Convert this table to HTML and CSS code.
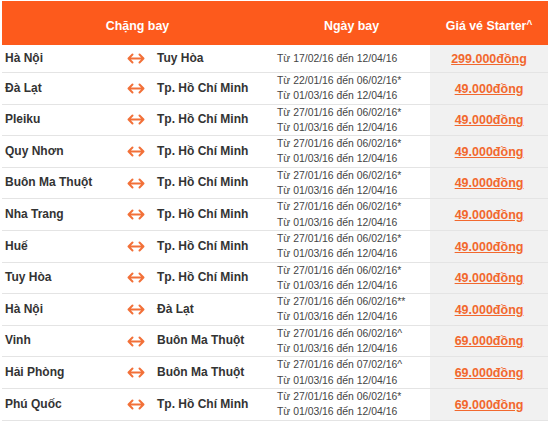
FILE: index.html
```html
<!DOCTYPE html>
<html lang="vi">
<head>
<meta charset="utf-8">
<title>Giá vé Starter</title>
<link rel="stylesheet" href="styles.css">
</head>
<body>
<table class="fares">
  <colgroup>
    <col class="c-from">
    <col class="c-arrow">
    <col class="c-to">
    <col class="c-date">
    <col class="c-price">
  </colgroup>
  <thead>
    <tr>
      <th colspan="3">Chặng bay</th>
      <th>Ngày bay</th>
      <th>Giá vé Starter<span class="caret">^</span></th>
    </tr>
  </thead>
  <tbody>
    <tr class="single">
      <td class="from">Hà Nội</td>
      <td class="arrow"><svg viewBox="0 0 18 11" width="18" height="11"><path d="M1.5 5.5h15M5.5 1.5l-4 4 4 4M12.5 1.5l4 4-4 4" fill="none" stroke="#f27038" stroke-width="2" stroke-linecap="round" stroke-linejoin="round"/></svg></td>
      <td class="to">Tuy Hòa</td>
      <td class="date">Từ 17/02/16 đến 12/04/16</td>
      <td class="price"><a href="#">299.000đồng</a></td>
    </tr>
    <tr>
      <td class="from">Đà Lạt</td>
      <td class="arrow"><svg viewBox="0 0 18 11" width="18" height="11"><path d="M1.5 5.5h15M5.5 1.5l-4 4 4 4M12.5 1.5l4 4-4 4" fill="none" stroke="#f27038" stroke-width="2" stroke-linecap="round" stroke-linejoin="round"/></svg></td>
      <td class="to">Tp. Hồ Chí Minh</td>
      <td class="date">Từ 22/01/16 đến 06/02/16*<br>Từ 01/03/16 đến 12/04/16</td>
      <td class="price"><a href="#">49.000đồng</a></td>
    </tr>
    <tr>
      <td class="from">Pleiku</td>
      <td class="arrow"><svg viewBox="0 0 18 11" width="18" height="11"><path d="M1.5 5.5h15M5.5 1.5l-4 4 4 4M12.5 1.5l4 4-4 4" fill="none" stroke="#f27038" stroke-width="2" stroke-linecap="round" stroke-linejoin="round"/></svg></td>
      <td class="to">Tp. Hồ Chí Minh</td>
      <td class="date">Từ 27/01/16 đến 06/02/16*<br>Từ 01/03/16 đến 12/04/16</td>
      <td class="price"><a href="#">49.000đồng</a></td>
    </tr>
    <tr>
      <td class="from">Quy Nhơn</td>
      <td class="arrow"><svg viewBox="0 0 18 11" width="18" height="11"><path d="M1.5 5.5h15M5.5 1.5l-4 4 4 4M12.5 1.5l4 4-4 4" fill="none" stroke="#f27038" stroke-width="2" stroke-linecap="round" stroke-linejoin="round"/></svg></td>
      <td class="to">Tp. Hồ Chí Minh</td>
      <td class="date">Từ 27/01/16 đến 06/02/16*<br>Từ 01/03/16 đến 12/04/16</td>
      <td class="price"><a href="#">49.000đồng</a></td>
    </tr>
    <tr>
      <td class="from">Buôn Ma Thuột</td>
      <td class="arrow"><svg viewBox="0 0 18 11" width="18" height="11"><path d="M1.5 5.5h15M5.5 1.5l-4 4 4 4M12.5 1.5l4 4-4 4" fill="none" stroke="#f27038" stroke-width="2" stroke-linecap="round" stroke-linejoin="round"/></svg></td>
      <td class="to">Tp. Hồ Chí Minh</td>
      <td class="date">Từ 27/01/16 đến 06/02/16*<br>Từ 01/03/16 đến 12/04/16</td>
      <td class="price"><a href="#">49.000đồng</a></td>
    </tr>
    <tr>
      <td class="from">Nha Trang</td>
      <td class="arrow"><svg viewBox="0 0 18 11" width="18" height="11"><path d="M1.5 5.5h15M5.5 1.5l-4 4 4 4M12.5 1.5l4 4-4 4" fill="none" stroke="#f27038" stroke-width="2" stroke-linecap="round" stroke-linejoin="round"/></svg></td>
      <td class="to">Tp. Hồ Chí Minh</td>
      <td class="date">Từ 27/01/16 đến 06/02/16*<br>Từ 01/03/16 đến 12/04/16</td>
      <td class="price"><a href="#">49.000đồng</a></td>
    </tr>
    <tr>
      <td class="from">Huế</td>
      <td class="arrow"><svg viewBox="0 0 18 11" width="18" height="11"><path d="M1.5 5.5h15M5.5 1.5l-4 4 4 4M12.5 1.5l4 4-4 4" fill="none" stroke="#f27038" stroke-width="2" stroke-linecap="round" stroke-linejoin="round"/></svg></td>
      <td class="to">Tp. Hồ Chí Minh</td>
      <td class="date">Từ 27/01/16 đến 06/02/16*<br>Từ 01/03/16 đến 12/04/16</td>
      <td class="price"><a href="#">49.000đồng</a></td>
    </tr>
    <tr>
      <td class="from">Tuy Hòa</td>
      <td class="arrow"><svg viewBox="0 0 18 11" width="18" height="11"><path d="M1.5 5.5h15M5.5 1.5l-4 4 4 4M12.5 1.5l4 4-4 4" fill="none" stroke="#f27038" stroke-width="2" stroke-linecap="round" stroke-linejoin="round"/></svg></td>
      <td class="to">Tp. Hồ Chí Minh</td>
      <td class="date">Từ 27/01/16 đến 06/02/16*<br>Từ 01/03/16 đến 12/04/16</td>
      <td class="price"><a href="#">49.000đồng</a></td>
    </tr>
    <tr>
      <td class="from">Hà Nội</td>
      <td class="arrow"><svg viewBox="0 0 18 11" width="18" height="11"><path d="M1.5 5.5h15M5.5 1.5l-4 4 4 4M12.5 1.5l4 4-4 4" fill="none" stroke="#f27038" stroke-width="2" stroke-linecap="round" stroke-linejoin="round"/></svg></td>
      <td class="to">Đà Lạt</td>
      <td class="date">Từ 27/01/16 đến 06/02/16**<br>Từ 01/03/16 đến 12/04/16</td>
      <td class="price"><a href="#">49.000đồng</a></td>
    </tr>
    <tr>
      <td class="from">Vinh</td>
      <td class="arrow"><svg viewBox="0 0 18 11" width="18" height="11"><path d="M1.5 5.5h15M5.5 1.5l-4 4 4 4M12.5 1.5l4 4-4 4" fill="none" stroke="#f27038" stroke-width="2" stroke-linecap="round" stroke-linejoin="round"/></svg></td>
      <td class="to">Buôn Ma Thuột</td>
      <td class="date">Từ 27/01/16 đến 06/02/16^<br>Từ 01/03/16 đến 12/04/16</td>
      <td class="price"><a href="#">69.000đồng</a></td>
    </tr>
    <tr>
      <td class="from">Hải Phòng</td>
      <td class="arrow"><svg viewBox="0 0 18 11" width="18" height="11"><path d="M1.5 5.5h15M5.5 1.5l-4 4 4 4M12.5 1.5l4 4-4 4" fill="none" stroke="#f27038" stroke-width="2" stroke-linecap="round" stroke-linejoin="round"/></svg></td>
      <td class="to">Buôn Ma Thuột</td>
      <td class="date">Từ 27/01/16 đến 07/02/16^<br>Từ 01/03/16 đến 12/04/16</td>
      <td class="price"><a href="#">69.000đồng</a></td>
    </tr>
    <tr>
      <td class="from">Phú Quốc</td>
      <td class="arrow"><svg viewBox="0 0 18 11" width="18" height="11"><path d="M1.5 5.5h15M5.5 1.5l-4 4 4 4M12.5 1.5l4 4-4 4" fill="none" stroke="#f27038" stroke-width="2" stroke-linecap="round" stroke-linejoin="round"/></svg></td>
      <td class="to">Tp. Hồ Chí Minh</td>
      <td class="date">Từ 27/01/16 đến 06/02/16*<br>Từ 01/03/16 đến 12/04/16</td>
      <td class="price"><a href="#">69.000đồng</a></td>
    </tr>
  </tbody>
</table>
</body>
</html>
```

FILE: styles.css
```css
html, body {
  margin: 0;
  padding: 0;
  background: #ffffff;
}

body {
  padding: 1px 2px 0 2px;
  font-family: "Liberation Sans", Arial, sans-serif;
  color: #333333;
}

.fares {
  width: 546px;
  border-collapse: collapse;
  table-layout: fixed;
}

.c-from { width: 118px; }
.c-arrow { width: 32px; }
.c-to { width: 121px; }
.c-date { width: 157px; }
.c-price { width: 118px; }

.fares th {
  height: 44px;
  padding: 5px 0 0 0;
  box-sizing: border-box;
  background: #fd5a1c;
  color: #ffffff;
  font-size: 12.4px;
  font-weight: bold;
  text-align: center;
  vertical-align: middle;
}

.caret {
  font-size: 10px;
  vertical-align: 2px;
}

.fares td {
  padding: 0;
  border-bottom: 1px solid #e4e4e4;
  vertical-align: middle;
  line-height: 15.3px;
}

.fares tr.single td {
  height: 27px;
}

.from {
  padding-left: 3px !important;
  font-size: 12px;
  font-weight: bold;
}

.arrow {
  padding-left: 7px !important;
}

.arrow svg {
  display: block;
}

.to {
  padding-left: 5px !important;
  font-size: 12px;
  font-weight: bold;
}

.date {
  padding-left: 4px !important;
  font-size: 10.4px;
  color: #444444;
}

.price {
  background: #f1f1f1;
  text-align: center;
}

.price a {
  color: #f2682e;
  font-size: 12.5px;
  font-weight: bold;
  text-decoration: underline;
}
```
